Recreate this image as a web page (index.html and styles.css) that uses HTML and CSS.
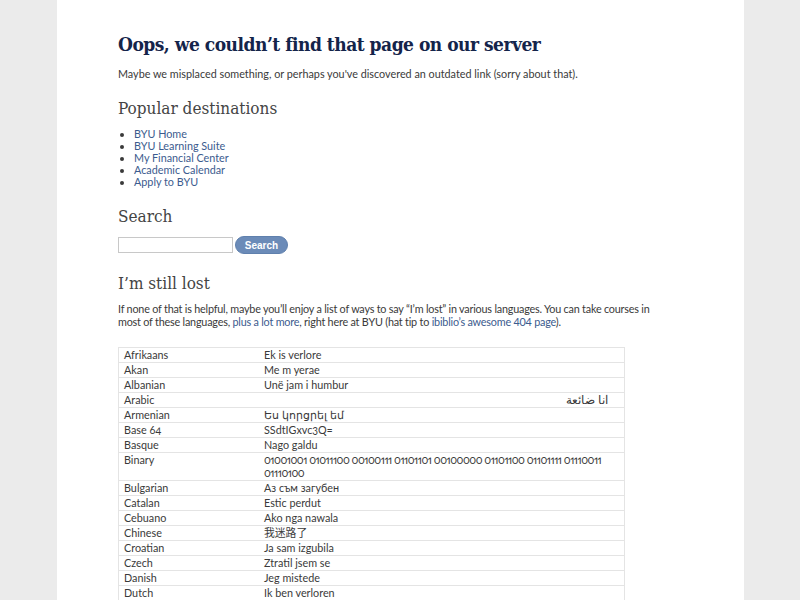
FILE: index.html
```html
<!DOCTYPE html>
<html>
<head>
<meta charset="utf-8">
<link rel="stylesheet" href="styles.css">
</head>
<body>
<div class="page">
  <main class="content">
    <h1 class="title">Oops, we couldn’t find that page on our server</h1>
    <p class="lead">Maybe we misplaced something, or perhaps you've discovered an outdated link (sorry about that).</p>

    <h2 class="section">Popular destinations</h2>
    <ul class="links">
      <li><a href="#">BYU Home</a></li>
      <li><a href="#">BYU Learning Suite</a></li>
      <li><a href="#">My Financial Center</a></li>
      <li><a href="#">Academic Calendar</a></li>
      <li><a href="#">Apply to BYU</a></li>
    </ul>

    <h2 class="section">Search</h2>
    <form class="search">
      <input class="search-input" type="text">
      <button class="search-btn" type="button">Search</button>
    </form>

    <h2 class="section">I’m still lost</h2>
    <p class="text">If none of that is helpful, maybe you’ll enjoy a list of ways to say “I’m lost” in various languages. You can take courses in most of these languages, <a href="#">plus a lot more</a>, right here at BYU (hat tip to <a href="#">ibiblio’s awesome 404 page</a>).</p>

    <table class="langs">
      <tr><td class="lang">Afrikaans</td><td>Ek is verlore</td></tr>
      <tr><td class="lang">Akan</td><td>Me m yerae</td></tr>
      <tr><td class="lang">Albanian</td><td>Unë jam i humbur</td></tr>
      <tr><td class="lang">Arabic</td><td class="rtl" dir="rtl">انا ضائعة</td></tr>
      <tr><td class="lang">Armenian</td><td>Ես կորցրել եմ</td></tr>
      <tr><td class="lang">Base 64</td><td>SSdtIGxvc3Q=</td></tr>
      <tr><td class="lang">Basque</td><td>Nago galdu</td></tr>
      <tr><td class="lang">Binary</td><td class="bin">01001001 01011100 00100111 01101101 00100000 01101100 01101111 01110011 01110100</td></tr>
      <tr><td class="lang">Bulgarian</td><td>Аз съм загубен</td></tr>
      <tr><td class="lang">Catalan</td><td>Estic perdut</td></tr>
      <tr><td class="lang">Cebuano</td><td>Ako nga nawala</td></tr>
      <tr><td class="lang">Chinese</td><td>我迷路了</td></tr>
      <tr><td class="lang">Croatian</td><td>Ja sam izgubila</td></tr>
      <tr><td class="lang">Czech</td><td>Ztratil jsem se</td></tr>
      <tr><td class="lang">Danish</td><td>Jeg mistede</td></tr>
      <tr><td class="lang">Dutch</td><td>Ik ben verloren</td></tr>
    </table>
  </main>
</div>
</body>
</html>
```
FILE: styles.css
```css
html, body {
  margin: 0;
  padding: 0;
}
body {
  background: #ebebeb;
  font-family: Lato, "Noto Sans CJK SC", sans-serif;
  font-size: 10.8px;
  color: #3a3a3a;
}
.page {
  width: 687px;
  margin-left: 57px;
  background: #fff;
  height: 600px;
  overflow: hidden;
}
.content {
  padding: 31px 0 0 61px;
  width: 560px;
}
.title {
  font-family: "DejaVu Serif Condensed", "DejaVu Serif", serif;
  font-weight: bold;
  font-size: 19px;
  letter-spacing: -0.5px;
  color: #14244a;
  margin: 0 0 10px;
  line-height: 26px;
}
.lead {
  margin: 0 0 16px;
  line-height: 14px;
}
.section {
  font-family: "DejaVu Serif Condensed", "DejaVu Serif", serif;
  font-weight: normal;
  font-size: 17px;
  color: #444;
  margin: 0 0 8px;
  line-height: 22px;
}
.links {
  margin: 0 0 17px;
  padding-left: 16px;
  line-height: 12px;
  padding-top: 1px;
}
a {
  color: #3b5b8e;
  text-decoration: none;
}
.search {
  display: flex;
  align-items: center;
  gap: 2px;
  margin: 0 0 18px;
  padding-top: 1px;
}
.search-input {
  width: 115px;
  height: 16px;
  box-sizing: border-box;
  border: 1px solid #c8c8c8;
  margin: 0;
  padding: 0;
}
.search-btn {
  width: 53px;
  height: 18px;
  border: 1px solid #5f80ad;
  border-radius: 9px;
  background: #6b8bb8;
  color: #fff;
  font-family: "Liberation Sans", sans-serif;
  font-weight: bold;
  font-size: 10px;
  padding: 0;
}
.text {
  width: 545px;
  margin: 0 0 19px;
  line-height: 13px;
  letter-spacing: -0.2px;
}
.langs {
  border-collapse: collapse;
  width: 507px;
  border: 1px solid #e4e4e4;
  font-variant-numeric: oldstyle-nums proportional-nums;
}
.langs td {
  border-top: 1px solid #e4e4e4;
  padding: 0 5px;
  line-height: 14px;
  vertical-align: top;
}
.langs td.lang {
  width: 130px;
}
.langs td.rtl {
  text-align: right;
  padding-right: 16px;
  font-size: 11.5px;
}
.langs td.bin {
  letter-spacing: -0.5px;
  line-height: 13px;
  padding-bottom: 1px;
}
```
